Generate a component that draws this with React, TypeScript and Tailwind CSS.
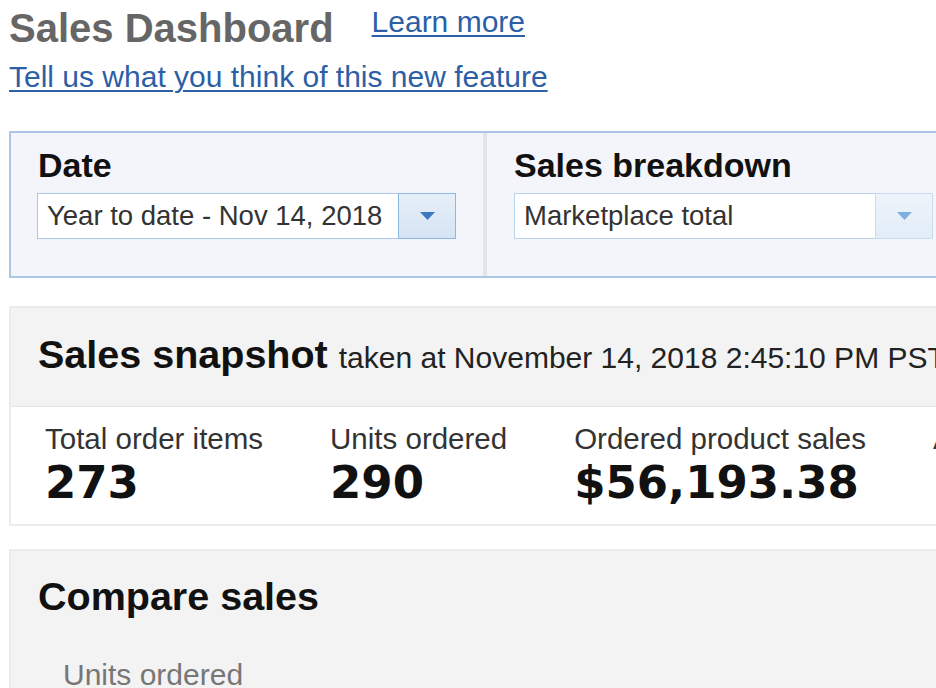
import React from "react";

const arial = { fontFamily: '"Liberation Sans", Arial, sans-serif' };

function Dropdown({ text, strong }: { text: string; strong?: boolean }) {
  return (
    <div className="flex h-[46px] w-[419px] bg-white">
      <div
        className={`flex flex-1 items-center border pl-[9px] text-[27.5px] leading-[32px] text-[#333] ${
          strong ? "border-[#a9c9ea]" : "border-[#b9d2ec]"
        } border-r-0`}
      >
        {text}
      </div>
      <div
        className={`flex w-[58px] items-center justify-center border ${
          strong
            ? "border-[#8cb7e3] bg-gradient-to-b from-[#e6eff8] to-[#d5e4f4]"
            : "border-[#c8dbef] bg-gradient-to-b from-[#eef4fa] to-[#e2edf8]"
        }`}
      >
        <svg width="15" height="8" viewBox="0 0 15 8">
          <polygon points="0,0 15,0 7.5,8" fill={strong ? "#3b7ac3" : "#7eafdd"} />
        </svg>
      </div>
    </div>
  );
}

export default function App() {
  return (
    <div
      className="h-[688px] w-[936px] overflow-hidden bg-white pl-[9px] pt-[5px] text-[#111]"
      style={arial}
    >
      <div className="w-[1200px]">
        <div className="flex items-start">
          <div className="text-[40px] font-bold leading-[46px] text-[#666]">Sales Dashboard</div>
          <a className="ml-[38px] text-[30px] leading-[34px] text-[#2c5fa6] underline decoration-[2px] underline-offset-[3px]">
            Learn more
          </a>
        </div>
        <div className="mt-[9px]">
          <a className="text-[30px] leading-[34px] text-[#2c5fa6] underline decoration-[2px] underline-offset-[3px]">
            Tell us what you think of this new feature
          </a>
        </div>

        <div className="mt-[37px] flex h-[147px] border-2 border-[#adc6e8] bg-[#f3f5fa]">
          <div className="w-[472px] pl-[26px] pt-[12px]">
            <div className="pl-[1px] text-[34px] font-bold leading-[40px] text-[#111]">Date</div>
            <div className="mt-[8px]">
              <Dropdown text="Year to date - Nov 14, 2018" strong />
            </div>
          </div>
          <div className="w-[4px] bg-[#e3e4e8]" />
          <div className="pl-[27px] pt-[12px]">
            <div className="text-[34px] font-bold leading-[40px] text-[#111]">Sales breakdown</div>
            <div className="mt-[8px]">
              <Dropdown text="Marketplace total" />
            </div>
          </div>
        </div>

        <div className="mt-[28px] border-2 border-[#ececec]">
          <div className="flex items-baseline bg-[#f3f3f3] pb-[25px] pl-[27px] pt-[23px]">
            <span className="text-[39.5px] font-bold leading-[46px] text-[#111]">Sales snapshot</span>
            <span className="ml-[11px] whitespace-nowrap text-[30px] leading-[46px] text-[#222]">
              taken at November 14, 2018 2:45:10 PM PST
            </span>
          </div>
          <div className="flex border-t border-[#e6e6e6] bg-white pb-[16px] pl-[34px] pt-[15px]">
            {[
              ["Total order items", "273"],
              ["Units ordered", "290"],
              ["Ordered product sales", "$56,193.38"],
              ["Avg. units/order item", "1.06"],
            ].map(([label, value], i) => (
              <div key={i} className="mr-[67px] shrink-0">
                <div className="whitespace-nowrap text-[29.5px] leading-[33px] text-[#333]">{label}</div>
                <div
                  className="mt-[3px] text-[45px] font-bold leading-[50px] text-[#111]"
                  style={{ fontFamily: '"DejaVu Sans", Verdana, sans-serif' }}
                >
                  {value}
                </div>
              </div>
            ))}
          </div>
        </div>

        <div className="mt-[23px] h-[200px] border-2 border-[#ececec] bg-[#f3f3f3] pl-[27px] pt-[22px]">
          <div className="text-[39.5px] font-bold leading-[46px] text-[#111]">Compare sales</div>
          <div className="mt-[39px] pl-[25px] text-[30px] leading-[33px] text-[#777]">Units ordered</div>
        </div>
      </div>
    </div>
  );
}
